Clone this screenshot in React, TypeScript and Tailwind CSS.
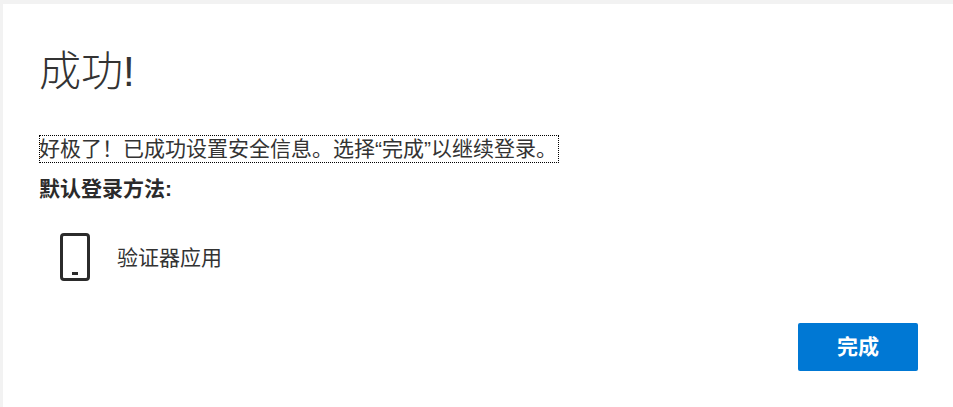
const cjk = "font-['Liberation_Sans','Noto_Sans_CJK_SC',sans-serif]";

function PhoneIcon() {
  return (
    <svg width="30" height="48" viewBox="0 0 30 48" fill="none">
      <rect x="1.5" y="1.5" width="27" height="45" rx="2.5" stroke="#2b2b2b" strokeWidth="3" />
      <rect x="12" y="39" width="6" height="3" fill="#2b2b2b" />
    </svg>
  );
}

export default function App() {
  return (
    <div className={`h-[407px] w-[953px] overflow-hidden bg-[#f2f2f2] pt-[4px] pl-[3px] ${cjk}`}>
      <div className="flex h-full flex-col bg-white pt-[38px] pr-[35px] pl-[36px]">
        <h1 className="text-[42px] leading-[60px] font-light text-[#333]">成功!</h1>
        <div className="mt-[33px] h-[28px] w-[520px] text-[21px] leading-[27px] whitespace-nowrap text-[#333] outline-1 -outline-offset-1 outline-black outline-dotted">
          好极了！已成功设置安全信息。选择“完成”以继续登录。
        </div>
        <div className="mt-[12px] text-[21px] leading-[28px] font-bold text-[#2b2b2b]">默认登录方法:</div>
        <div className="mt-[30px] flex items-center pl-[21px]">
          <PhoneIcon />
          <span className="ml-[27px] pt-[2px] text-[21px] leading-[28px] text-[#333]">验证器应用</span>
        </div>
        <div className="mt-[42px] flex justify-end">
          <button className="h-[48px] w-[120px] rounded-[2px] bg-[#0078d4] text-[21px] font-bold text-white">
            完成
          </button>
        </div>
      </div>
    </div>
  );
}
